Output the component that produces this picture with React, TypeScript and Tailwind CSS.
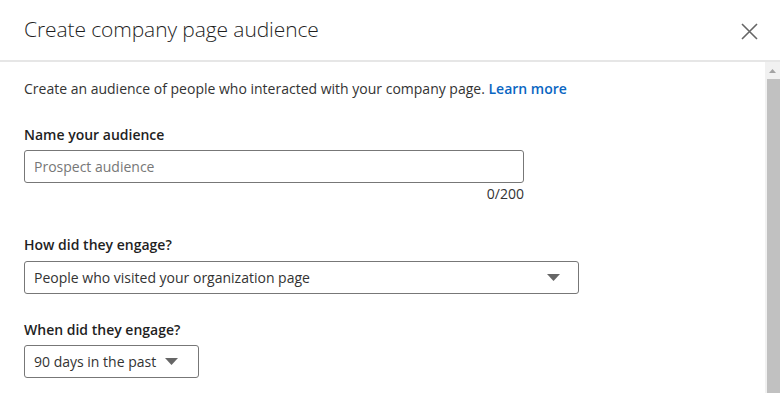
import React from 'react';

const font = { fontFamily: '"Open Sans", "Noto Sans", sans-serif' };

const Caret: React.FC<{ className?: string }> = ({ className }) => (
  <svg width="13" height="7" viewBox="0 0 13 7" className={className}>
    <path d="M0 0 L13 0 L6.5 7 Z" fill="#666666" />
  </svg>
);

const App: React.FC = () => {
  return (
    <div className="w-[780px] h-[393px] bg-white flex flex-col overflow-hidden text-[#333333]" style={font}>
      <header className="h-[62px] shrink-0 flex items-center justify-between pl-6 pr-[22px] border-b-2 border-[#e6e6e6]">
        <h1 className="text-[21px] font-light text-[#1f1f1f] tracking-[-0.1px]">Create company page audience</h1>
        <button className="w-[17px] h-[17px] mt-[2px]">
          <svg width="17" height="17" viewBox="0 0 17 17">
            <path d="M1 1 L16 16 M16 1 L1 16" stroke="#666666" strokeWidth="1.6" />
          </svg>
        </button>
      </header>

      <div className="flex flex-1 min-h-0">
        <main className="flex-1 pl-6 pt-[17px]">
          <p className="text-[14px] leading-[20px]">
            Create an audience of people who interacted with your company page.{' '}
            <a className="font-semibold text-[#0a66c2]">Learn more</a>
          </p>

          <label className="block mt-[26px] text-[14px] leading-[20px] font-semibold text-[#1f1f1f]">Name your audience</label>
          <div className="w-[500px] mt-[5px]">
            <div className="h-[33px] border border-[#777777] rounded-[3px] flex items-center px-[9px]">
              <span className="text-[14px] text-[#777777]">Prospect audience</span>
            </div>
            <div className="text-right text-[14px] leading-[20px] mt-[1px]">0/200</div>
          </div>

          <label className="block mt-[31px] text-[14px] leading-[20px] font-semibold text-[#1f1f1f]">How did they engage?</label>
          <div className="w-[555px] h-[33px] mt-[6px] border border-[#777777] rounded-[3px] flex items-center justify-between pl-[9px] pr-[18px]">
            <span className="text-[14px]">People who visited your organization page</span>
            <Caret />
          </div>

          <label className="block mt-[26px] text-[14px] leading-[20px] font-semibold text-[#1f1f1f]">When did they engage?</label>
          <div className="w-[175px] h-[33px] mt-[5px] border border-[#777777] rounded-[3px] flex items-center gap-[9px] pl-[9px]">
            <span className="text-[14px]">90 days in the past</span>
            <Caret />
          </div>
        </main>

        <div className="w-[15px] shrink-0 bg-[#f1f1f1] flex flex-col">
          <div className="h-[17px] flex items-center justify-center">
            <svg width="7" height="4" viewBox="0 0 7 4">
              <path d="M0 4 L3.5 0 L7 4 Z" fill="#a3a3a3" />
            </svg>
          </div>
          <div className="flex-1 ml-[2px] bg-[#c1c1c1]" />
        </div>
      </div>
    </div>
  );
};

export default App;
